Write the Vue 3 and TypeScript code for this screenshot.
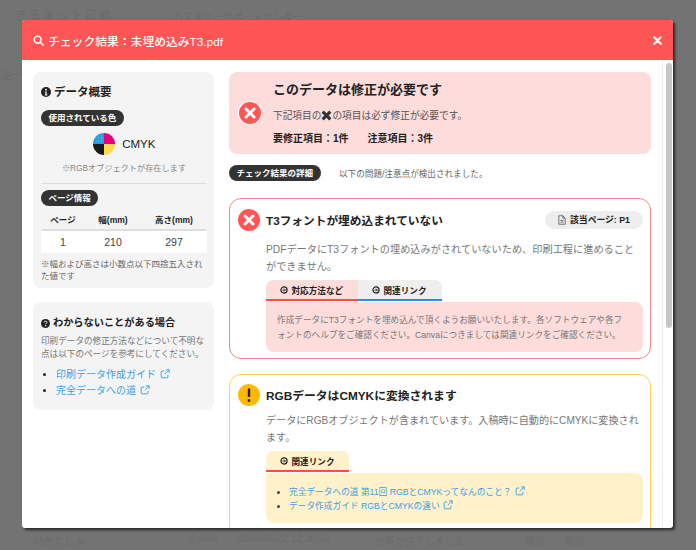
<script setup lang="ts">
const relatedLinks = [
  "完全データへの道 第11回 RGBとCMYKってなんのこと？",
  "データ作成ガイド RGBとCMYKの違い",
];
const helpLinks = ["印刷データ作成ガイド", "完全データへの道"];
</script>

<template>
  <div class="page">
    <div class="page__behind">
      <span class="behind behind--a">きるネット印刷</span>
      <span class="behind behind--b">カスタマーサポートセンター</span>
      <span class="behind behind--d">品一</span>
      <span class="behind behind--e">A5色なし.ai</span>
      <span class="behind behind--f">2.4MB</span>
      <span class="behind behind--g">2026/06/22 12:26:52</span>
      <span class="behind behind--h">分析が完了しました</span>
      <span class="behind behind--i">確認</span>
      <span class="behind behind--j">削除</span>
    </div>

    <section class="modal">
      <header class="modal__head">
        <h1 class="modal__title">
          <svg class="modal__search" viewBox="0 0 16 16">
            <circle cx="6.8" cy="6.8" r="5" fill="none" stroke="#fff" stroke-width="2.2" />
            <path d="M10.6 10.6 14.6 14.6" stroke="#fff" stroke-width="2.4" stroke-linecap="round" />
          </svg>
          チェック結果：未埋め込みT3.pdf
        </h1>
        <svg class="modal__close" viewBox="0 0 10 10">
          <path d="M1.5 1.5 8.5 8.5M8.5 1.5 1.5 8.5" stroke="#fff" stroke-width="2.4" stroke-linecap="round" />
        </svg>
      </header>

      <div class="modal__body">
        <div class="columns">
          <aside class="side">
            <div class="panel panel--summary">
              <h2 class="panel__title">
                <svg class="panel__icon" viewBox="0 0 16 16">
                  <circle cx="8" cy="8" r="8" fill="#222" />
                  <circle cx="8" cy="4.2" r="1.5" fill="#f4f4f4" />
                  <path d="M6.2 7h3v5h1v1.4H6V12h1.1V8.4H6.2z" fill="#f4f4f4" />
                </svg>
                データ概要
              </h2>
              <span class="pill">使用されている色</span>
              <div class="cmyk">
                <svg class="cmyk__mark" viewBox="0 0 22 22">
                  <path d="M11 11V0A11 11 0 0 0 0 11z" fill="#2a9ce0" />
                  <path d="M11 11V0A11 11 0 0 1 22 11z" fill="#e6007e" />
                  <path d="M11 11H22A11 11 0 0 1 11 22z" fill="#ffd84d" />
                  <path d="M11 11V22A11 11 0 0 1 0 11z" fill="#1a1a1a" />
                  <path d="M8 3h.8M5 5h.8M8 5.5h.8M3.5 8h.8M6 8h.8M8.5 8h.8" stroke="#bfe3f8" stroke-width=".7" />
                </svg>
                <span class="cmyk__label">CMYK</span>
              </div>
              <p class="cmyk__note">※RGBオブジェクトが存在します</p>
              <hr class="panel__rule" />
              <span class="pill">ページ情報</span>
              <table class="sizes">
                <thead>
                  <tr>
                    <th>ページ</th>
                    <th>幅(mm)</th>
                    <th>高さ(mm)</th>
                  </tr>
                </thead>
                <tbody>
                  <tr>
                    <td>1</td>
                    <td>210</td>
                    <td>297</td>
                  </tr>
                </tbody>
              </table>
              <p class="sizes__note">※幅および高さは小数点以下四捨五入された値です</p>
            </div>

            <div class="panel panel--help">
              <h3 class="help__title">
                <svg class="help__icon" viewBox="0 0 16 16">
                  <circle cx="8" cy="8" r="8" fill="#222" />
                  <path d="M5.5 6.2C5.6 4.7 6.7 4 8 4c1.5 0 2.6.8 2.6 2.1 0 1.8-2.2 1.8-2.2 3.4" fill="none" stroke="#f4f4f4" stroke-width="1.7" />
                  <circle cx="8.3" cy="12" r="1.2" fill="#f4f4f4" />
                </svg>
                わからないことがある場合
              </h3>
              <p class="help__text">印刷データの修正方法などについて不明な点は以下のページを参考にしてください。</p>
              <ul class="help__links">
                <li v-for="link in helpLinks" :key="link">
                  <a class="link">{{ link }}
                    <svg class="link__out" viewBox="0 0 12 12">
                      <path d="M9.5 7v2.6a1 1 0 0 1-1 1H2.4a1 1 0 0 1-1-1V3.5a1 1 0 0 1 1-1H5M7.2 1h3.8v3.8M11 1 5.6 6.4" fill="none" stroke="currentColor" stroke-width="1.1" />
                    </svg>
                  </a>
                </li>
              </ul>
            </div>
          </aside>

          <main class="results">
            <div class="alert">
              <span class="mark mark--error mark--ring">
                <svg viewBox="0 0 22 22">
                  <path d="M7 7 15 15M15 7 7 15" stroke="#fff" stroke-width="3" stroke-linecap="round" />
                </svg>
              </span>
              <div class="alert__body">
                <h2 class="alert__title">このデータは修正が必要です</h2>
                <p class="alert__text">
                  下記項目の<svg class="alert__x" viewBox="0 0 10 10"><path d="M1.5 1.5 8.5 8.5M8.5 1.5 1.5 8.5" stroke="#333" stroke-width="2.8" /></svg>の項目は必ず修正が必要です。
                </p>
                <p class="alert__count"><span>要修正項目：1件</span><span>注意項目：3件</span></p>
              </div>
            </div>

            <div class="detail">
              <span class="pill">チェック結果の詳細</span>
              <span class="detail__text">以下の問題/注意点が検出されました。</span>
            </div>

            <article class="card card--error">
              <div class="card__head">
                <span class="mark mark--error">
                  <svg viewBox="0 0 22 22">
                    <path d="M7 7 15 15M15 7 7 15" stroke="#fff" stroke-width="3" stroke-linecap="round" />
                  </svg>
                </span>
                <h3 class="card__title">T3フォントが埋め込まれていない</h3>
                <span class="badge">
                  <svg class="badge__icon" viewBox="0 0 10 12">
                    <path d="M1 .7h5l3 3v7.6H1zM6 .7v3h3M3 6.5h4M3 8.6h4" fill="none" stroke="#444" stroke-width=".9" />
                  </svg>
                  該当ページ: P1
                </span>
              </div>
              <p class="card__text">PDFデータにT3フォントの埋め込みがされていないため、印刷工程に進めることができません。</p>
              <div class="tabs">
                <span class="tab tab--pink">
                  <svg class="tab__icon" viewBox="0 0 12 12">
                    <circle cx="6" cy="6" r="4.6" fill="none" stroke="#222" stroke-width="1.8" />
                    <path d="M3.6 6h4.2M6 3.9 8.1 6 6 8.1" fill="none" stroke="#222" stroke-width="1.3" />
                  </svg>
                  対応方法など
                </span>
                <span class="tab tab--grey">
                  <svg class="tab__icon" viewBox="0 0 12 12">
                    <circle cx="6" cy="6" r="4.6" fill="none" stroke="#222" stroke-width="1.8" />
                    <path d="M3.6 6h4.2M6 3.9 8.1 6 6 8.1" fill="none" stroke="#222" stroke-width="1.3" />
                  </svg>
                  関連リンク
                </span>
              </div>
              <div class="tabpane tabpane--pink">
                作成データにT3フォントを埋め込んで頂くようお願いいたします。各ソフトウェアや各フォントのヘルプをご確認ください。Canvaにつきましては関連リンクをご確認ください。
              </div>
            </article>

            <article class="card card--warn">
              <div class="card__head">
                <span class="mark mark--warn">
                  <svg viewBox="0 0 22 22">
                    <path d="M11 4.5V13" stroke="#222" stroke-width="2.4" />
                    <path d="M11 15.2V17.8" stroke="#222" stroke-width="2.4" />
                  </svg>
                </span>
                <h3 class="card__title card__title--large">RGBデータはCMYKに変換されます</h3>
              </div>
              <p class="card__text">データにRGBオブジェクトが含まれています。入稿時に自動的にCMYKに変換されます。</p>
              <div class="tabs">
                <span class="tab tab--cream">
                  <svg class="tab__icon" viewBox="0 0 12 12">
                    <circle cx="6" cy="6" r="4.6" fill="none" stroke="#222" stroke-width="1.8" />
                    <path d="M3.6 6h4.2M6 3.9 8.1 6 6 8.1" fill="none" stroke="#222" stroke-width="1.3" />
                  </svg>
                  関連リンク
                </span>
              </div>
              <div class="tabpane tabpane--cream">
                <ul class="tabpane__links">
                  <li v-for="link in relatedLinks" :key="link">
                    <a class="link">{{ link }}
                      <svg class="link__out" viewBox="0 0 12 12">
                        <path d="M9.5 7v2.6a1 1 0 0 1-1 1H2.4a1 1 0 0 1-1-1V3.5a1 1 0 0 1 1-1H5M7.2 1h3.8v3.8M11 1 5.6 6.4" fill="none" stroke="currentColor" stroke-width="1.1" />
                      </svg>
                    </a>
                  </li>
                </ul>
              </div>
            </article>
          </main>
        </div>

        <div class="rail">
          <div class="rail__thumb"></div>
        </div>
      </div>
    </section>
  </div>
</template>

<style>
html,
body {
  margin: 0;
  overflow: hidden;
}
</style>

<style scoped>
.page {
  position: relative;
  box-sizing: border-box;
  width: 696px;
  height: 550px;
  padding: 20px 23px 22px 22px;
  overflow: hidden;
  background: #737373;
  font-family: "Liberation Sans", "Noto Sans CJK JP", sans-serif;
  color: #222;
}

.behind {
  position: absolute;
  color: #6b6b6b;
  font-size: 10px;
  white-space: nowrap;
}
.behind--a { left: 15px; top: 6px; font-size: 12px; letter-spacing: 2px; }
.behind--b { left: 173px; top: 9px; }
.behind--d { left: 0; top: 66px; font-size: 12px; }
.behind--e { left: 32px; top: 533px; }
.behind--f { left: 190px; top: 533px; }
.behind--g { left: 238px; top: 533px; }
.behind--h { left: 375px; top: 533px; }
.behind--i { left: 525px; top: 533px; }
.behind--j { left: 565px; top: 533px; }

.modal {
  position: relative;
  display: flex;
  flex-direction: column;
  height: 508px;
  width: 651px;
  overflow: hidden;
  border-radius: 3px;
  background: #fff;
  box-shadow: 2px 2px 3px rgba(0, 0, 0, 0.65);
}

.modal__head {
  display: flex;
  flex: none;
  align-items: center;
  justify-content: space-between;
  height: 40px;
  padding: 0 11px;
  background: #ff5555;
  color: #fff;
}

.modal__title {
  display: flex;
  align-items: center;
  gap: 4px;
  margin: 0;
  font-size: 11.8px;
  font-weight: 500;
}

.modal__search {
  width: 11px;
  height: 11px;
}

.modal__close {
  width: 9px;
  height: 9px;
}

.modal__body {
  display: flex;
  flex: 1;
  min-height: 0;
}

.rail {
  flex: none;
  box-sizing: border-box;
  width: 11px;
  padding: 3px 1px 0 3px;
  border-left: 1px solid #eee;
}

.rail__thumb {
  height: 265px;
  border-radius: 3px;
  background: #c6c6c6;
}

.columns {
  display: grid;
  flex: 1;
  grid-template-columns: 181px 422px;
  gap: 15px;
  align-items: start;
  padding: 12px 0 0 11px;
  overflow: hidden;
}

.side {
  display: flex;
  flex-direction: column;
  gap: 14px;
}

.panel {
  box-sizing: border-box;
  border-radius: 8px;
  background: #f4f4f4;
  padding: 12px 7px 6px 8px;
}

.panel__title {
  display: flex;
  align-items: center;
  gap: 3px;
  margin: 0 0 10px;
  font-size: 11.5px;
  line-height: 16px;
  font-weight: 700;
}

.panel__icon {
  width: 10px;
  height: 10px;
}

.pill {
  display: block;
  width: fit-content;
  padding: 0 7.5px;
  border-radius: 8px;
  background: #333;
  color: #fff;
  font-size: 8.5px;
  font-weight: 700;
  line-height: 16px;
  white-space: nowrap;
}

.cmyk {
  display: flex;
  align-items: center;
  justify-content: center;
  gap: 7.5px;
  margin-top: 7px;
}

.cmyk__mark {
  width: 22px;
  height: 22px;
}

.cmyk__label {
  font-size: 11.5px;
  font-weight: 500;
}

.cmyk__note {
  margin: 7px 0 0;
  color: #888;
  font-size: 8.2px;
  line-height: 14px;
  text-align: center;
}

.panel__rule {
  height: 1px;
  margin: 7px 0 6px;
  border: 0;
  background: #ddd;
}

.sizes {
  width: 100%;
  margin-top: 3px;
  border-collapse: collapse;
  table-layout: fixed;
}

.sizes th {
  height: 20px;
  padding: 0;
  border-bottom: 2px solid #ddd;
  font-size: 8.5px;
  font-weight: 700;
}

.sizes th:first-child { width: 44px; }
.sizes th:nth-child(2) { width: 56px; }

.sizes td {
  height: 22px;
  padding: 0;
  background: #fff;
  color: #444;
  font-size: 10.5px;
  text-align: center;
}

.sizes__note {
  margin: 5px 0 0;
  color: #666;
  font-size: 8.5px;
  line-height: 12px;
}

.panel--help {
  height: 108px;
  padding-top: 13px;
}

.help__title {
  display: flex;
  align-items: center;
  gap: 3px;
  margin: 0;
  font-size: 10.2px;
  font-weight: 700;
  line-height: 16px;
}

.help__icon {
  width: 9px;
  height: 9px;
}

.help__text {
  margin: 4px 0 0;
  color: #777;
  font-size: 8.6px;
  line-height: 12.5px;
}

.help__links {
  margin: 7px 0 0;
  padding-left: 15px;
  font-size: 10px;
  line-height: 16px;
}

.link {
  color: #3d9fe6;
}

.link__out {
  display: inline-block;
  width: 10px;
  height: 10px;
  margin-left: 1px;
  vertical-align: -1px;
}

.results {
  min-width: 0;
}

.alert {
  display: flex;
  align-items: center;
  gap: 12px;
  box-sizing: border-box;
  height: 82px;
  padding: 0 10px;
  border-radius: 8px;
  background: #fddcdc;
}

.mark {
  display: flex;
  flex: none;
  box-sizing: border-box;
  width: 22px;
  height: 22px;
  border-radius: 50%;
}

.mark svg {
  width: 100%;
  height: 100%;
}

.mark--error {
  background: #ff5555;
}

.mark--ring {
  box-shadow: 0 0 0 1px #fff;
}

.mark--warn {
  background: #ffb900;
}

.alert__title {
  margin: 0;
  font-size: 13px;
  font-weight: 700;
  line-height: 20px;
}

.alert__text {
  margin: 9px 0 0;
  color: #555;
  font-size: 9.7px;
  line-height: 14px;
}

.alert__x {
  width: 11px;
  height: 11px;
  vertical-align: -2px;
}

.alert__count {
  display: flex;
  gap: 19px;
  margin: 9px 0 0;
  font-size: 10px;
  font-weight: 700;
  line-height: 14px;
}

.detail {
  display: flex;
  align-items: center;
  gap: 18.5px;
  margin: 11px 0 17px;
}

.detail__text {
  color: #666;
  font-size: 8.6px;
}

.card {
  box-sizing: border-box;
  margin-bottom: 15px;
  padding: 10px 7px 7px 8px;
  border: 1px solid;
  border-radius: 12px;
}

.card--error {
  height: 161px;
  border-color: #f08a8a;
}

.card--warn {
  padding-bottom: 14px;
  padding-top: 9px;
  border-color: #ffd34d;
}

.card__head {
  display: flex;
  align-items: center;
  gap: 6px;
}

.card__title {
  flex: 1;
  margin: -2px 0 0;
  font-size: 11.7px;
  font-weight: 700;
}

.card__title--large {
  font-size: 11.8px;
}

.badge {
  display: flex;
  align-items: center;
  gap: 4px;
  padding: 0 13px;
  border-radius: 9px;
  background: #eee;
  font-size: 8.8px;
  font-weight: 700;
  line-height: 18px;
}

.badge__icon {
  width: 8px;
  height: 10px;
}

.card__text {
  margin: 11px 0 0 28px;
  color: #777;
  font-size: 10.2px;
  line-height: 16.5px;
}

.card--warn .card__text {
  margin-top: 7px;
  font-size: 10.1px;
}

.tabs {
  display: flex;
  margin: 5px 0 0 28px;
}

.tab {
  display: flex;
  align-items: center;
  gap: 3.5px;
  box-sizing: border-box;
  height: 21px;
  padding: 0 14px;
  border-bottom: 2px solid;
  font-size: 8.6px;
  font-weight: 700;
  white-space: nowrap;
}

.tab__icon {
  width: 8px;
  height: 8px;
}

.tab--pink {
  width: 92px;
  border-radius: 7px 0 0 0;
  background: #fddcdc;
  border-color: #ff4d4d;
}

.tab--grey {
  width: 84px;
  border-radius: 0 7px 0 0;
  background: #eee;
  border-color: #2a8fdc;
}

.tab--cream {
  width: 83px;
  border-radius: 7px 7px 0 0;
  background: #fff1c9;
  border-color: #ff4d4d;
}

.tabpane {
  margin: 1px 0 0 28px;
  padding: 11px 14px 9px 11px;
  border-radius: 0 8px 8px 8px;
  color: #777;
  font-size: 8.63px;
  line-height: 15px;
}

.tabpane--pink {
  background: #fddcdc;
}

.tabpane--cream {
  padding: 12px 11px 10px;
  background: #fff1c9;
}

.tabpane__links {
  margin: 0;
  padding-left: 12px;
  color: #444;
  font-size: 8.7px;
  line-height: 14px;
}
</style>
